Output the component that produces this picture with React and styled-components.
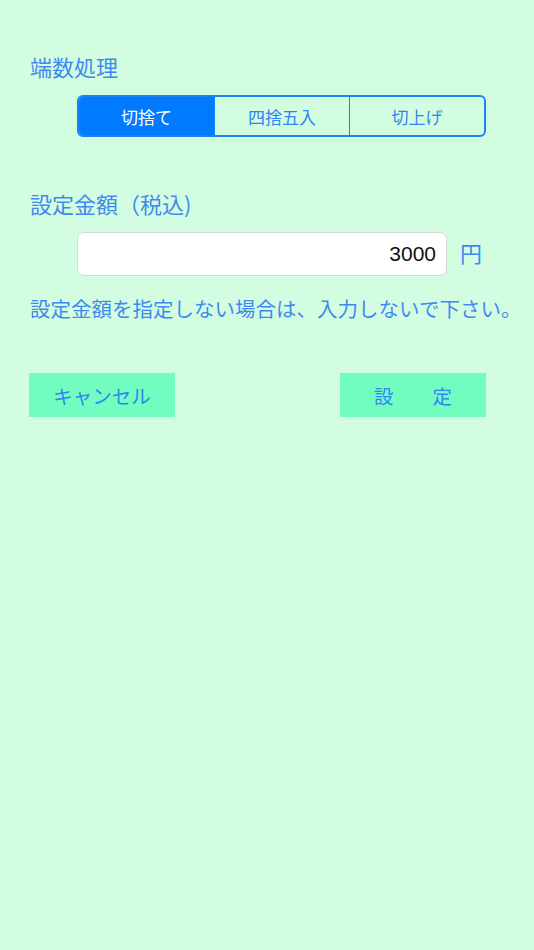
import React from 'react'
import styled, { createGlobalStyle } from 'styled-components'

const GlobalStyle = createGlobalStyle`
  html, body {
    margin: 0;
    padding: 0;
    background: #d2fde1;
  }
  body {
    font-family: "Noto Sans CJK JP", "Noto Sans", sans-serif;
  }
`

const Page = styled.div`
  min-height: 950px;
  padding: 50px 10px 0 30px;
  box-sizing: border-box;
  display: flex;
  flex-direction: column;
`

const Label = styled.p`
  margin: 0;
  font-size: 22px;
  line-height: 32px;
  color: #3f8af0;
`

const Segmented = styled.div`
  display: grid;
  grid-template-columns: repeat(3, 1fr);
  margin: 13px 0 0 47px;
  width: 409px;
  height: 42px;
  box-sizing: border-box;
  border: 2px solid #1a82f7;
  border-radius: 6px;
  overflow: hidden;
`

const Segment = styled.div`
  display: flex;
  align-items: center;
  justify-content: center;
  font-size: 17px;
  color: ${p => (p.$active ? '#ffffff' : '#2f86f2')};
  background: ${p => (p.$active ? '#007aff' : 'transparent')};
  & + & {
    border-left: 1.5px solid #1a82f7;
  }
`

const Section = styled.div`
  margin-top: ${p => p.$top}px;
`

const InputRow = styled.div`
  display: flex;
  align-items: center;
  margin: 13px 0 0 47px;
  gap: 13px;
`

const AmountBox = styled.div`
  width: 370px;
  height: 44px;
  box-sizing: border-box;
  background: #ffffff;
  border: 1px solid #d4d8d6;
  border-radius: 7px;
  display: flex;
  align-items: center;
  justify-content: flex-end;
  padding-right: 10px;
  font-family: "Liberation Sans", Arial, sans-serif;
  font-size: 21px;
  color: #111;
`

const Unit = styled.span`
  font-size: 22px;
  line-height: 1;
  margin-top: -4px;
  color: #3f8af0;
`

const Note = styled.p`
  margin: 18px 0 0;
  font-size: 20.5px;
  line-height: 28px;
  color: #3f8af0;
  white-space: nowrap;
`

const ButtonRow = styled.div`
  display: flex;
  justify-content: space-between;
  width: 457px;
  margin-top: 51px;
  margin-left: -1px;
`

const ActionButton = styled.div`
  width: 146px;
  height: 44px;
  background: #72fdc0;
  display: flex;
  align-items: center;
  justify-content: center;
  font-size: 19.5px;
  color: #2f86f2;
`

export default function App() {
  return (
    <React.Fragment>
      <GlobalStyle />
      <Page>
        <Label>端数処理</Label>
        <Segmented>
          <Segment $active>切捨て</Segment>
          <Segment>四捨五入</Segment>
          <Segment>切上げ</Segment>
        </Segmented>

        <Section $top={50}>
          <Label>設定金額（税込)</Label>
          <InputRow>
            <AmountBox>3000</AmountBox>
            <Unit>円</Unit>
          </InputRow>
          <Note>設定金額を指定しない場合は、入力しないで下さい。</Note>
        </Section>

        <ButtonRow>
          <ActionButton>キャンセル</ActionButton>
          <ActionButton>設　　定</ActionButton>
        </ButtonRow>
      </Page>
    </React.Fragment>
  )
}
